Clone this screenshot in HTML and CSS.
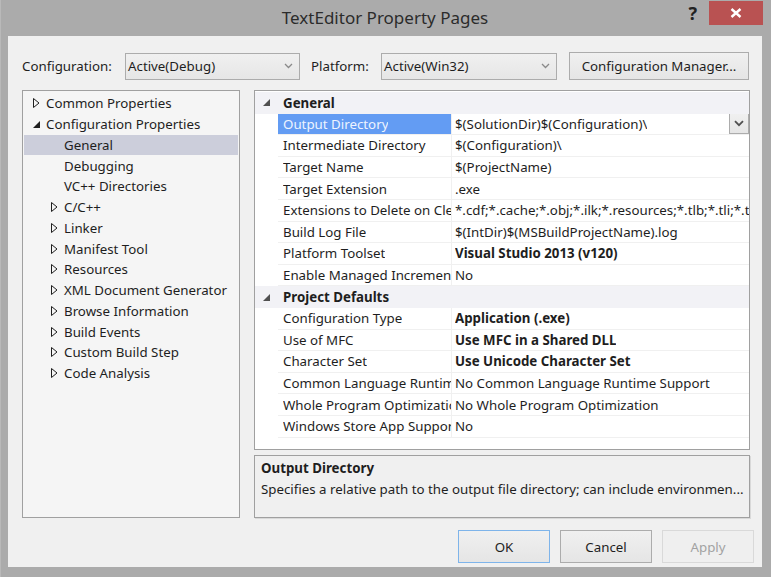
FILE: index.html
```html
<!DOCTYPE html>
<html>
<head>
<meta charset="utf-8">
<title>TextEditor Property Pages</title>
<link rel="stylesheet" href="styles.css">
</head>
<body>
<div class="window">
  <div class="titlebar">
    <div class="tb-spacer"></div>
    <div class="title">TextEditor Property Pages</div>
    <div class="controls">
      <span class="help">?</span>
      <span class="close"><svg width="12" height="10" viewBox="0 0 12 10"><path d="M1.5 1 L10.5 9 M10.5 1 L1.5 9" stroke="#fff" stroke-width="2.4" fill="none"/></svg></span>
    </div>
  </div>
  <div class="client">
    <div class="toolbar">
      <span class="lbl lbl-config">Configuration:</span>
      <div class="combo combo-config"><span>Active(Debug)</span><svg class="chev" width="9" height="6" viewBox="0 0 9 6"><path d="M1 1 L4.5 4.5 L8 1" stroke="#8a8a8a" stroke-width="1.3" fill="none"/></svg></div>
      <span class="lbl lbl-platform">Platform:</span>
      <div class="combo combo-platform"><span>Active(Win32)</span><svg class="chev" width="9" height="6" viewBox="0 0 9 6"><path d="M1 1 L4.5 4.5 L8 1" stroke="#8a8a8a" stroke-width="1.3" fill="none"/></svg></div>
      <div class="btn btn-cm">Configuration Manager...</div>
    </div>
    <div class="main">
      <div class="tree">
        <div class="node l0"><span class="exp"><svg width="7" height="10" viewBox="0 0 7 10"><path d="M0.5 0.5 L6 5 L0.5 9.5 Z" fill="none" stroke="#1e1e1e"/></svg></span>Common Properties</div>
        <div class="node l0"><span class="exp"><svg width="7" height="7" viewBox="0 0 7 7"><path d="M7 0 L7 7 L0 7 Z" fill="#1e1e1e"/></svg></span>Configuration Properties</div>
        <div class="node l1 selected"><span class="exp"></span>General</div>
        <div class="node l1"><span class="exp"></span>Debugging</div>
        <div class="node l1"><span class="exp"></span>VC++ Directories</div>
        <div class="node l1"><span class="exp"><svg width="7" height="10" viewBox="0 0 7 10"><path d="M0.5 0.5 L6 5 L0.5 9.5 Z" fill="none" stroke="#1e1e1e"/></svg></span>C/C++</div>
        <div class="node l1"><span class="exp"><svg width="7" height="10" viewBox="0 0 7 10"><path d="M0.5 0.5 L6 5 L0.5 9.5 Z" fill="none" stroke="#1e1e1e"/></svg></span>Linker</div>
        <div class="node l1"><span class="exp"><svg width="7" height="10" viewBox="0 0 7 10"><path d="M0.5 0.5 L6 5 L0.5 9.5 Z" fill="none" stroke="#1e1e1e"/></svg></span>Manifest Tool</div>
        <div class="node l1"><span class="exp"><svg width="7" height="10" viewBox="0 0 7 10"><path d="M0.5 0.5 L6 5 L0.5 9.5 Z" fill="none" stroke="#1e1e1e"/></svg></span>Resources</div>
        <div class="node l1"><span class="exp"><svg width="7" height="10" viewBox="0 0 7 10"><path d="M0.5 0.5 L6 5 L0.5 9.5 Z" fill="none" stroke="#1e1e1e"/></svg></span>XML Document Generator</div>
        <div class="node l1"><span class="exp"><svg width="7" height="10" viewBox="0 0 7 10"><path d="M0.5 0.5 L6 5 L0.5 9.5 Z" fill="none" stroke="#1e1e1e"/></svg></span>Browse Information</div>
        <div class="node l1"><span class="exp"><svg width="7" height="10" viewBox="0 0 7 10"><path d="M0.5 0.5 L6 5 L0.5 9.5 Z" fill="none" stroke="#1e1e1e"/></svg></span>Build Events</div>
        <div class="node l1"><span class="exp"><svg width="7" height="10" viewBox="0 0 7 10"><path d="M0.5 0.5 L6 5 L0.5 9.5 Z" fill="none" stroke="#1e1e1e"/></svg></span>Custom Build Step</div>
        <div class="node l1"><span class="exp"><svg width="7" height="10" viewBox="0 0 7 10"><path d="M0.5 0.5 L6 5 L0.5 9.5 Z" fill="none" stroke="#1e1e1e"/></svg></span>Code Analysis</div>
      </div>
      <div class="right">
        <div class="grid">
          <div class="cat"><span class="gut"><svg width="7" height="7" viewBox="0 0 7 7"><path d="M7 0 L7 7 L0 7 Z" fill="#505050"/></svg></span><span class="cat-name">General</span></div>
          <div class="prow active"><span class="gut"></span><span class="pname"><span class="clip">Output Directory</span></span><span class="pval"><span class="clip">$(SolutionDir)$(Configuration)\</span><span class="dd"><svg width="10" height="7" viewBox="0 0 10 7"><path d="M1 1.2 L5 5.2 L9 1.2" stroke="#505050" stroke-width="1.8" fill="none"/></svg></span></span></div>
          <div class="prow"><span class="gut"></span><span class="pname"><span class="clip">Intermediate Directory</span></span><span class="pval"><span class="clip">$(Configuration)\</span></span></div>
          <div class="prow"><span class="gut"></span><span class="pname"><span class="clip">Target Name</span></span><span class="pval"><span class="clip">$(ProjectName)</span></span></div>
          <div class="prow"><span class="gut"></span><span class="pname"><span class="clip">Target Extension</span></span><span class="pval"><span class="clip">.exe</span></span></div>
          <div class="prow"><span class="gut"></span><span class="pname"><span class="clip">Extensions to Delete on Clean</span></span><span class="pval"><span class="clip">*.cdf;*.cache;*.obj;*.ilk;*.resources;*.tlb;*.tli;*.tlh;*.tmp;*.rsp</span></span></div>
          <div class="prow"><span class="gut"></span><span class="pname"><span class="clip">Build Log File</span></span><span class="pval"><span class="clip">$(IntDir)$(MSBuildProjectName).log</span></span></div>
          <div class="prow"><span class="gut"></span><span class="pname"><span class="clip">Platform Toolset</span></span><span class="pval b"><span class="clip">Visual Studio 2013 (v120)</span></span></div>
          <div class="prow"><span class="gut"></span><span class="pname"><span class="clip">Enable Managed Incremental Build</span></span><span class="pval"><span class="clip">No</span></span></div>
          <div class="cat"><span class="gut"><svg width="7" height="7" viewBox="0 0 7 7"><path d="M7 0 L7 7 L0 7 Z" fill="#505050"/></svg></span><span class="cat-name">Project Defaults</span></div>
          <div class="prow"><span class="gut"></span><span class="pname"><span class="clip">Configuration Type</span></span><span class="pval b"><span class="clip">Application (.exe)</span></span></div>
          <div class="prow"><span class="gut"></span><span class="pname"><span class="clip">Use of MFC</span></span><span class="pval b"><span class="clip">Use MFC in a Shared DLL</span></span></div>
          <div class="prow"><span class="gut"></span><span class="pname"><span class="clip">Character Set</span></span><span class="pval b"><span class="clip">Use Unicode Character Set</span></span></div>
          <div class="prow"><span class="gut"></span><span class="pname"><span class="clip">Common Language Runtime Support</span></span><span class="pval"><span class="clip">No Common Language Runtime Support</span></span></div>
          <div class="prow"><span class="gut"></span><span class="pname"><span class="clip">Whole Program Optimization</span></span><span class="pval"><span class="clip">No Whole Program Optimization</span></span></div>
          <div class="prow"><span class="gut"></span><span class="pname"><span class="clip">Windows Store App Support</span></span><span class="pval"><span class="clip">No</span></span></div>
        </div>
        <div class="desc">
          <div class="desc-title">Output Directory</div>
          <div class="desc-text">Specifies a relative path to the output file directory; can include environmen...</div>
        </div>
      </div>
    </div>
    <div class="buttons">
      <div class="btn dlg default">OK</div>
      <div class="btn dlg">Cancel</div>
      <div class="btn dlg disabled">Apply</div>
    </div>
  </div>
</div>
</body>
</html>
```
FILE: styles.css
```css
* { box-sizing: border-box; }
html, body { margin: 0; padding: 0; }
body {
  width: 771px;
  height: 577px;
  overflow: hidden;
  background: #ababab;
  font-family: "Noto Sans", "Open Sans", sans-serif;
  font-size: 13.3px;
  color: #1e1e1e;
}
.window {
  width: 771px;
  height: 577px;
  display: flex;
  flex-direction: column;
  padding: 0 9px 10px 7px;
  border-left: 1px solid #b9b9b9;
}
.titlebar {
  height: 36px;
  display: grid;
  grid-template-columns: 1fr auto 1fr;
  align-items: start;
}
.title {
  font-size: 17px;
  color: #2b2b2b;
  line-height: 36px;
}
.controls {
  justify-self: end;
  display: flex;
  align-items: flex-start;
  margin-right: -1px;
}
.help {
  font-weight: bold;
  font-size: 18px;
  line-height: 18px;
  color: #222;
  margin-top: 4px;
  margin-right: 12px;
}
.close {
  width: 54px;
  height: 24px;
  margin-top: 1px;
  background: #b95252;
  display: flex;
  align-items: center;
  justify-content: center;
}
.client {
  flex: 1;
  background: #f0f0f0;
  display: flex;
  flex-direction: column;
  padding: 16px 8px 4px 14px;
}
.toolbar {
  height: 28px;
  display: flex;
  align-items: center;
  margin-right: 5px;
}
.lbl { white-space: nowrap; }
.lbl-config { width: 103px; }
.lbl-platform { width: 70px; margin-left: 11px; }
.combo {
  height: 27px;
  border: 1px solid #acacac;
  background: linear-gradient(#f0f0f0, #e6e6e6);
  display: flex;
  align-items: center;
  justify-content: space-between;
  padding: 0 6px 0 2px;
}
.combo-config { width: 175px; }
.combo-platform { width: 176px; }
.btn {
  border: 1px solid #acacac;
  background: linear-gradient(#f0f0f0, #e5e5e5);
  display: flex;
  align-items: center;
  justify-content: center;
  white-space: nowrap;
}
.btn-cm { width: 180px; height: 28px; margin-left: 12px; }
.main {
  height: 428px;
  margin-top: 10px;
  display: flex;
  margin-right: 4px;
}
.tree {
  width: 218px;
  border: 1px solid #a0a0a0;
  background: #f5f5f5;
  padding: 2px 1px;
  margin-right: 14px;
}
.node {
  height: 20.75px;
  display: flex;
  align-items: center;
  white-space: nowrap;
}
.node.l0 { padding-left: 9px; }
.node.l1 { padding-left: 27px; }
.exp {
  width: 13px;
  flex: none;
  display: flex;
  align-items: center;
}
.node.selected { background: #cccedb; }
.right {
  width: 496px;
  display: flex;
  flex-direction: column;
}
.grid {
  flex: 1;
  border: 1px solid #a0a0a0;
  background: #fff;
  padding-top: 1px;
  overflow: hidden;
}
.cat, .prow {
  height: 21.6px;
  display: flex;
  align-items: stretch;
  white-space: nowrap;
}
.cat { background: #f2f2f6; font-weight: bold; }
.gut {
  width: 23px;
  flex: none;
  display: flex;
  align-items: center;
  padding-left: 8px;
}
.cat-name { display: flex; align-items: center; padding-left: 5px; }
.pname {
  width: 174px;
  flex: none;
  overflow: hidden;
  display: flex;
  align-items: center;
  padding-left: 5px;
  border-right: 1px solid #f0f0f0;
  border-bottom: 1px solid #f0f0f0;
}
.pval {
  flex: 1;
  min-width: 0;
  overflow: hidden;
  display: flex;
  align-items: center;
  padding-left: 3px;
  border-bottom: 1px solid #f0f0f0;
}
.clip {
  display: block;
  min-width: 0;
  overflow: hidden;
  white-space: nowrap;
  text-overflow: clip;
}
.pval.b { font-weight: bold; }
.prow.active .pname { background: #639cf3; color: #eef4ff; }
.dd {
  margin-left: auto;
  width: 20px;
  height: 21px;
  border: 1px solid #acacac;
  background: linear-gradient(#f0f0f0, #e5e5e5);
  display: flex;
  align-items: center;
  justify-content: center;
  flex: none;
}
.desc {
  height: 63px;
  margin-top: 5px;
  border: 1px solid #a0a0a0;
  box-shadow: 1px 1px 0 #d9d9d9;
  background: #f0f0f0;
  padding: 2px 6px;
  white-space: nowrap;
  overflow: hidden;
}
.desc-title { font-weight: bold; line-height: 20px; }
.desc-text { line-height: 22px; }
.buttons {
  margin-top: 12px;
  display: flex;
  justify-content: flex-end;
  gap: 10px;
}
.btn.dlg { width: 92px; height: 33px; }
.btn.dlg.default { border-color: #7eb4ea; }
.btn.dlg.disabled { border-color: #d9d9d9; background: #efefef; color: #a2a2a2; }
```
